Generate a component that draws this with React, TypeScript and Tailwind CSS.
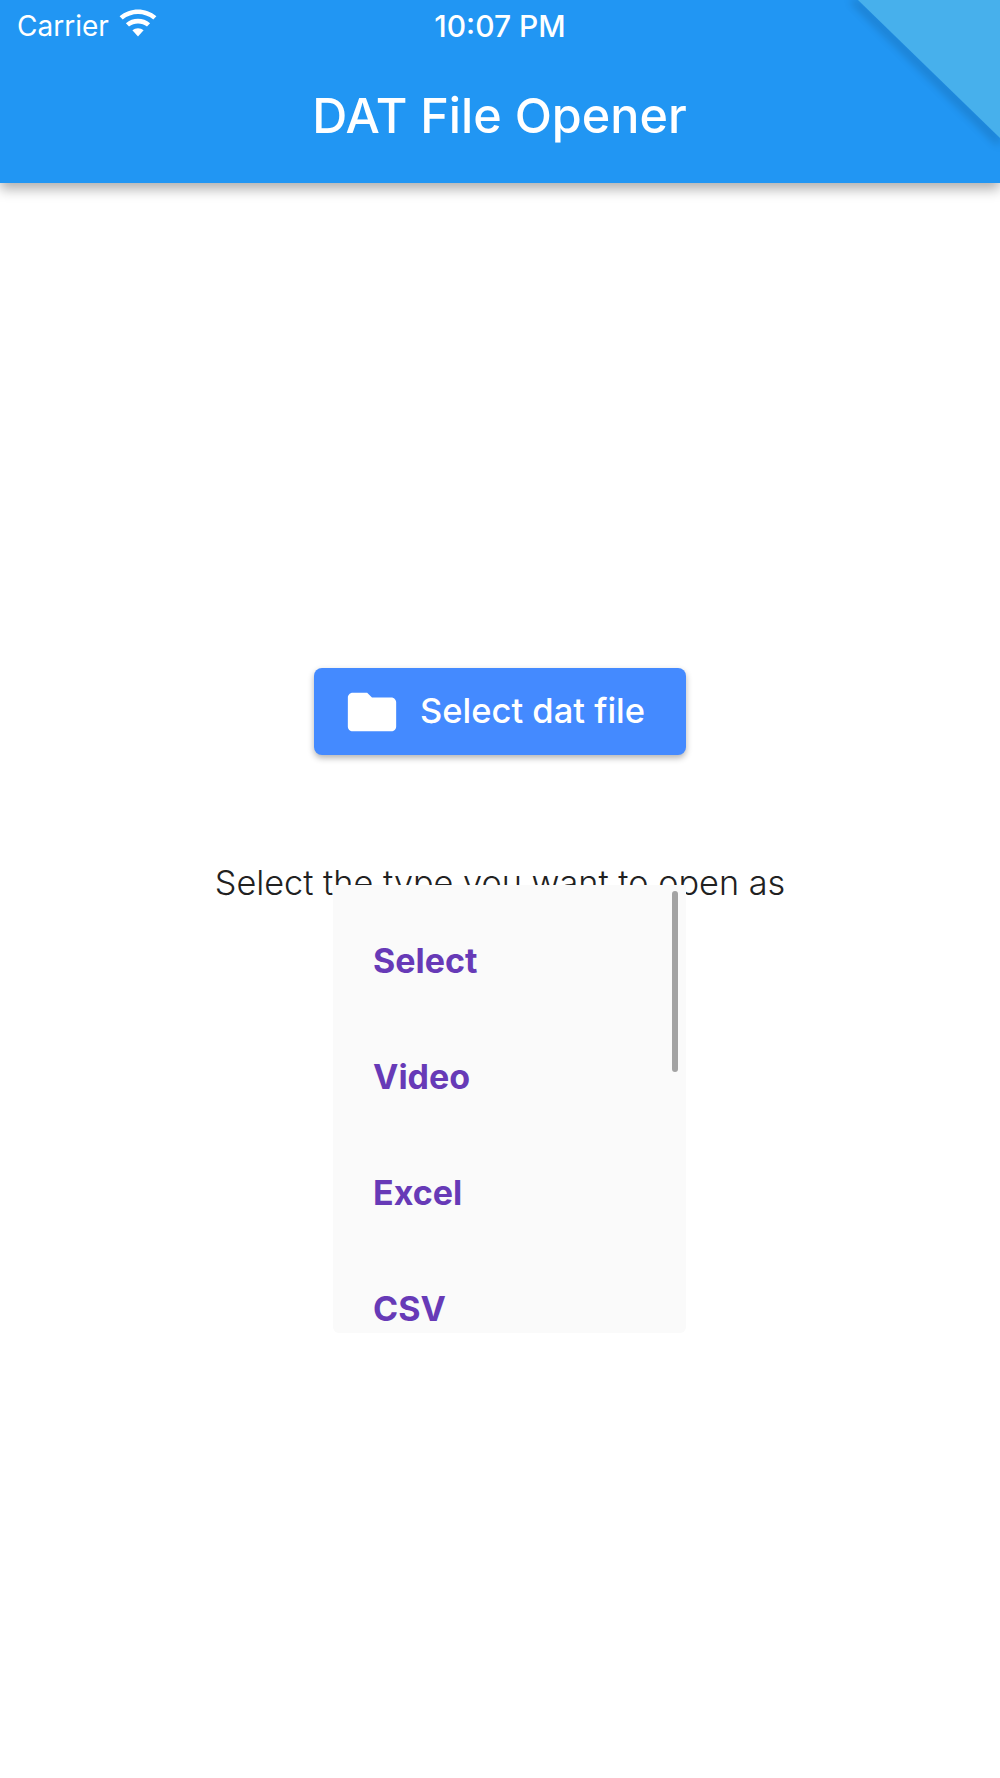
const font = "font-['Inter',sans-serif]";

function Wifi() {
  return (
    <svg width="38" height="28" viewBox="0 0 38 28" className="ml-[10px] mt-[-6px]">
      <path d="M19 27.5 L13.4 21.3 C16.6 18.6 21.4 18.6 24.6 21.3 Z" fill="#fff" />
      <path d="M10 17.6 L6.9 14.2 C13.8 8.4 24.2 8.4 31.1 14.2 L28 17.6 C22.8 13.3 15.2 13.3 10 17.6 Z" fill="#fff" />
      <path d="M3.7 10.6 L0.6 7.2 C11.2 -1.9 26.8 -1.9 37.4 7.2 L34.3 10.6 C25.5 3.2 12.5 3.2 3.7 10.6 Z" fill="#fff" />
    </svg>
  );
}

function Banner() {
  return (
    <svg width="160" height="160" viewBox="0 0 160 160" className="absolute top-0 right-0">
      <defs>
        <filter id="bs" x="-30%" y="-30%" width="160%" height="160%">
          <feGaussianBlur stdDeviation="5" />
        </filter>
      </defs>
      <polygon points="18,0 160,138 160,146 10,0" fill="#000" opacity="0.22" filter="url(#bs)" />
      <polygon points="18,0 160,0 160,138" fill="#47B0EC" />
    </svg>
  );
}

function Folder() {
  return (
    <svg width="58" height="58" viewBox="0 0 24 24" fill="#fff" className="ml-[-9px]">
      <path d="M10 4H4c-1.1 0-1.99.9-1.99 2L2 18c0 1.1.9 2 2 2h16c1.1 0 2-.9 2-2V8c0-1.1-.9-2-2-2h-8l-2-2z" />
    </svg>
  );
}

const items = ["Select", "Video", "Excel", "CSV"];

export default function App() {
  return (
    <div className={`relative min-h-[1778px] w-[1000px] overflow-hidden bg-white ${font}`}>
      <header className="relative h-[183px] bg-[#2196F3] text-white shadow-[0_6px_12px_rgba(0,0,0,0.32)]">
        <Banner />
        <div className="relative flex h-[52px] items-center pl-[17px]">
          <span className="text-[28px] leading-none">Carrier</span>
          <Wifi />
          <span className="absolute left-0 right-0 text-center text-[30px] font-medium leading-none">10:07 PM</span>
        </div>
        <h1 className="relative mt-[36px] pr-[1px] text-center text-[48.5px] font-medium leading-[56px]">DAT File Opener</h1>
      </header>

      <main className="relative flex flex-col items-center pt-[485px]">
        <button className="flex h-[87px] w-[372px] items-center rounded-[8px] bg-[#448AFF] pl-[38px] text-white shadow-[0_3px_6px_rgba(0,0,0,0.3)]">
          <Folder />
          <span className="ml-[19px] text-[34.5px] font-medium leading-none">Select dat file</span>
        </button>

        <p className="mt-[110px] text-center text-[34.25px] font-light leading-[36px] text-[#212121]">
          Select the type you want to open as
        </p>

        <div className="absolute left-[333px] top-[702px] h-[448px] w-[353px] overflow-hidden rounded-b-[6px] bg-[#FAFAFA]">
          <ul className="flex flex-col pl-[40px] pt-[17px]">
            {items.map((item) => (
              <li key={item} className="flex h-[116px] shrink-0 items-center text-[34px] font-bold text-[#673AB7]">
                {item}
              </li>
            ))}
          </ul>
          <div className="absolute right-[8px] top-[6px] h-[181px] w-[6px] rounded-full bg-[#A3A3A3]" />
        </div>
      </main>
    </div>
  );
}
